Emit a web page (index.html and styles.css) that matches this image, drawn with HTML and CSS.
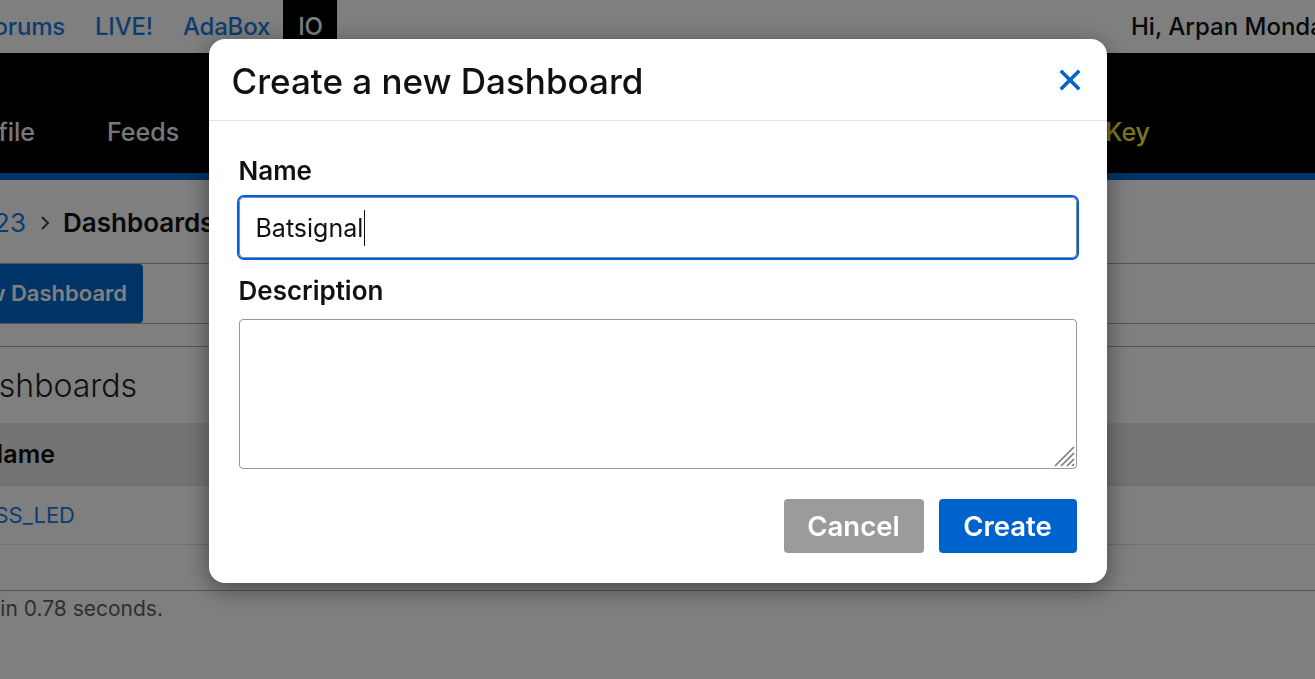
FILE: index.html
```html
<!DOCTYPE html>
<html>
<head>
<meta charset="utf-8">
<link rel="stylesheet" href="styles.css">
</head>
<body>
<div class="page">
  <header class="topbar">
    <nav class="toplinks">
      <a class="tl first"><span class="clip"><span class="ltr">Forums</span></span></a>
      <a class="tl">LIVE!</a>
      <a class="tl">AdaBox</a>
      <a class="tl io">IO</a>
    </nav>
    <div class="greet">Hi, Arpan Mondal</div>
  </header>
  <nav class="mainnav">
    <a class="ni first clip"><span class="ltr">Profile</span></a>
    <a class="ni">Feeds</a>
    <span class="spacer"></span>
    <a class="ni key">My Key</a>
  </nav>
  <main class="content">
    <div class="crumbs">
      <a class="cl clip"><span class="ltr">arpan_1123</span></a>
      <svg class="chev" viewBox="0 0 10 16" width="10" height="16"><path d="M2 2 L8 8 L2 14" fill="none" stroke="#444" stroke-width="2"/></svg>
      <span class="cur">Dashboards</span>
    </div>
    <div class="toolbar"><a class="newbtn clip"><span class="ltr">+ New Dashboard</span></a></div>
    <div class="gap"></div>
    <h2 class="heading"><span class="hl clip"><span class="ltr">Dashboards</span></span></h2>
    <div class="table">
      <div class="thead"><span class="cell clip"><span class="ltr">Name</span></span></div>
      <div class="trow"><a class="tlink clip"><span class="ltr">WIRELESS_LED</span></a></div>
      <div class="trow empty"></div>
    </div>
    <p class="foot"><span class="ft clip"><span class="ltr">Page rendered in 0.78 seconds.</span></span></p>
  </main>
</div>
<div class="overlay">
  <div class="modal">
    <div class="mhead">
      <h1 class="mtitle">Create a new Dashboard</h1>
      <svg class="close" viewBox="0 0 22 22" width="22" height="22"><path d="M3 3 L19 19 M19 3 L3 19" stroke="#0066cc" stroke-width="3.6" stroke-linecap="square"/></svg>
    </div>
    <div class="mbody">
      <label class="lbl">Name</label>
      <div class="field focus"><span class="val">Batsignal</span><span class="caret"></span></div>
      <label class="lbl lbl2">Description</label>
      <div class="area">
        <svg class="grip" viewBox="0 0 24 24" width="24" height="24"><path d="M23 4 L4 23 M23 10 L10 23 M23 16 L16 23 M23 21 L21 23" stroke="#777" stroke-width="1.6"/></svg>
      </div>
      <div class="actions">
        <button class="btn cancel">Cancel</button>
        <button class="btn create">Create</button>
      </div>
    </div>
  </div>
</div>
</body>
</html>
```

FILE: styles.css
```css
* { box-sizing: border-box; }
html, body { margin: 0; padding: 0; }
body {
  width: 1315px;
  height: 679px;
  overflow: hidden;
  background: #fff;
  font-family: Inter, "Open Sans", sans-serif;
  color: #000;
}
a { text-decoration: none; }

.page { width: 1315px; }

/* text clipped at the left window edge: right-aligned, overflowing to the left */
.clip {
  display: block;
  direction: rtl;
  overflow: hidden;
  white-space: nowrap;
}
.ltr { direction: ltr; unicode-bidi: isolate; display: inline-block; }

/* top strip */
.topbar {
  height: 53px;
  display: flex;
  align-items: stretch;
  justify-content: space-between;
  background: #fff;
}
.toplinks { display: flex; }
.tl {
  display: flex;
  align-items: center;
  padding: 0 15px;
  font-size: 24px;
  font-weight: 500;
  letter-spacing: -0.2px;
  color: #1a7ae0;
  white-space: nowrap;
}
.tl.first { padding-left: 0; }
.tl.first .clip { width: 65px; }
.tl.io { background: #000; color: #fff; padding: 0 14px 0 15px; margin-left: -2px; }
.greet {
  width: 184px;
  display: flex;
  align-items: center;
  font-size: 24px;
  font-weight: 500;
  color: #111;
  white-space: nowrap;
  overflow: hidden;
}

/* main nav */
.mainnav {
  height: 127px;
  background: #000;
  border-bottom: 7px solid #0066cc;
  display: flex;
  align-items: center;
  padding-top: 38px;
}
.ni {
  color: #f0f0f0;
  font-size: 25px;
  font-weight: 500;
  margin-right: 72px;
  white-space: nowrap;
}
.ni.first { width: 35px; }
.spacer { flex: 1; }
.ni.key { color: #f6f232; margin-right: 165px; }

/* content */
.crumbs {
  height: 84px;
  display: flex;
  align-items: center;
  padding-top: 2px;
  font-size: 26px;
  border-bottom: 1px solid #aaa;
}
.cl { width: 26px; color: #1a7ae0; }
.chev { display: block; margin: 0 13px 0 14px; }
.cur { font-weight: 600; color: #111; white-space: nowrap; }

.toolbar {
  height: 60px;
  border-bottom: 1px solid #aaa;
}
.newbtn {
  width: 143px;
  height: 59px;
  line-height: 59px;
  padding-right: 16px;
  background: #0066cc;
  color: #fff;
  font-size: 22px;
  font-weight: 600;
  border-radius: 0 4px 4px 0;
}
.gap { height: 23px; border-bottom: 1px solid #aaa; }

.heading {
  margin: 0;
  height: 76px;
  display: flex;
  align-items: center;
  font-size: 32px;
  font-weight: 300;
  color: #222;
}
.hl { width: 137px; }
.table { border-bottom: 1px solid #aaa; }
.thead {
  height: 63px;
  display: flex;
  align-items: center;
  background: #e8e8e8;
  border-bottom: 1px solid #dedede;
  font-size: 25px;
  font-weight: 600;
  color: #111;
}
.thead .cell { width: 55px; }
.trow {
  height: 59px;
  display: flex;
  align-items: center;
  border-bottom: 1px solid #dedede;
}
.trow.empty { height: 45px; border-bottom: 0; }
.tlink { width: 75px; color: #1a7ae0; font-size: 22px; }
.foot { margin: 5px 0 0 0; font-size: 21px; color: #5e5e5e; }
.ft { width: 163px; }

/* modal */
.overlay {
  position: fixed;
  inset: 0;
  background: rgba(0, 0, 0, 0.5);
  display: flex;
  justify-content: center;
  align-items: flex-start;
  padding-top: 39px;
}
.modal {
  width: 898px;
  background: #fff;
  border-radius: 16px;
  box-shadow: 0 6px 24px rgba(0, 0, 0, 0.45);
}
.mhead {
  height: 82px;
  border-bottom: 1px solid #e2e2e2;
  display: flex;
  align-items: center;
  justify-content: space-between;
  padding: 2px 26px 0 23px;
}
.mtitle {
  margin: 0;
  font-size: 35px;
  font-weight: 500;
  color: #111;
}
.close { display: block; margin-top: -2px; }
.mbody { padding: 35px 30px 30px 30px; display: flex; flex-direction: column; }
.lbl {
  font-size: 26px;
  font-weight: 600;
  line-height: 30px;
  color: #111;
}
.lbl2 { margin-top: 18px; }
.field {
  margin-top: 11px;
  height: 61px;
  border: 1px solid #7b8ea8;
  border-radius: 5px;
  display: flex;
  align-items: center;
  padding-left: 16px;
}
.field.focus { box-shadow: 0 0 0 2px #0060df; }
.val { font-size: 25px; color: #111; }
.caret { width: 1px; height: 36px; background: #111; margin-left: 1px; }
.area {
  margin-top: 13px;
  height: 150px;
  border: 1px solid #999;
  border-radius: 4px;
  display: flex;
  justify-content: flex-end;
  align-items: flex-end;
}
.grip { display: block; margin: 0 1px 1px 0; }
.actions {
  margin-top: 30px;
  display: flex;
  justify-content: flex-end;
  gap: 15px;
}
.btn {
  height: 54px;
  border: 0;
  border-radius: 4px;
  color: #fff;
  font-family: Inter, "Open Sans", sans-serif;
  font-size: 27.5px;
  font-weight: 600;
  padding: 0;
}
.cancel { width: 140px; background: #9b9b9b; }
.create { width: 138px; background: #0062cc; }
```
